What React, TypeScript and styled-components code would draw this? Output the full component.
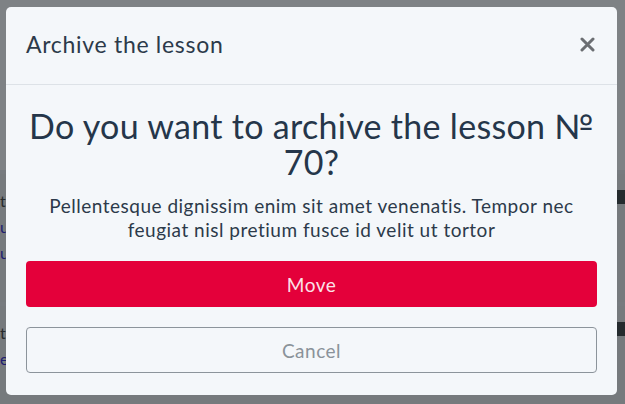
import React from "react"
import styled, { createGlobalStyle } from "styled-components"

const GlobalStyle = createGlobalStyle`
    html, body {
        margin: 0;
        padding: 0;
        width: 625px;
        height: 404px;
        overflow: hidden;
        background: #f4f6f8;
        font-family: Lato, "Open Sans", sans-serif;
    }
`

const Page = styled.div`
    position: relative;
    width: 625px;
    height: 404px;
    overflow: hidden;
`

const BackgroundList = styled.div`
    display: flex;
    flex-direction: column;
    padding-top: 170px;
`

const BackgroundRow = styled.div`
    display: flex;
    justify-content: space-between;
    height: 112px;
    padding: 16px 0 0 0;
    border-top: 4px solid #e4e7ea;
    background: #e2e4e6;
    font-size: 16px;
    line-height: 22px;
    color: #333;
`

const RowText = styled.div`
    display: flex;
    flex-direction: column;
    gap: 4px;
`

const BackgroundLink = styled.span`
    color: #2316c8;
`

const RowAction = styled.div`
    width: 60px;
    height: 14px;
    background: #303538;
`

const Overlay = styled.div`
    position: absolute;
    inset: 0;
    background: rgba(30, 34, 38, 0.55);
`

const Modal = styled.div`
    position: absolute;
    left: 6px;
    top: 7px;
    width: 611px;
    height: 388px;
    background: #f4f7fa;
    border-radius: 5px;
    display: flex;
    flex-direction: column;
    overflow: hidden;
`

const Header = styled.div`
    display: flex;
    align-items: center;
    justify-content: space-between;
    height: 74px;
    padding: 0 22px 3px 20px;
    border-bottom: 1px solid #dde2e7;
`

const Title = styled.h2`
    margin: 0;
    font-size: 23px;
    letter-spacing: 0.7px;
    font-weight: 400;
    color: #2c3a4a;
`

const CloseButton = styled.button`
    border: 0;
    background: none;
    padding: 0;
    display: flex;
    cursor: pointer;
`

const Body = styled.div`
    display: flex;
    flex-direction: column;
    padding: 23px 20px 0;
    text-align: center;
`

const Question = styled.h1`
    margin: 0 -4px;
    font-size: 34px;
    letter-spacing: 0.3px;
    line-height: 36px;
    font-weight: 400;
    color: #25364a;
`

const Text = styled.p`
    margin: 14px 20px 0;
    font-size: 19px;
    letter-spacing: 0.5px;
    line-height: 24px;
    color: #2c3a4a;
`

const Actions = styled.div`
    display: flex;
    flex-direction: column;
    gap: 20px;
    margin-top: 19px;
`

const Button = styled.button<{ $primary?: boolean }>`
    height: 46px;
    border-radius: 4px;
    font-family: inherit;
    font-size: 19px;
    letter-spacing: 0.5px;
    border: ${p => (p.$primary ? "none" : "1px solid #8c949b")};
    background: ${p => (p.$primary ? "#e4003a" : "transparent")};
    color: ${p => (p.$primary ? "#fbe2e8" : "#8a9299")};
`

const CloseIcon = () => (
    <svg width="15" height="15" viewBox="0 0 15 15">
        <path d="M2 2 L13 13 M13 2 L2 13" stroke="#6b6e72" strokeWidth="3" strokeLinecap="round" />
    </svg>
)

export default function App() {
    return (
        <Page>
            <GlobalStyle />
            <BackgroundList>
                <BackgroundRow>
                    <RowText>
                        <span>tr</span>
                        <BackgroundLink>u</BackgroundLink>
                        <BackgroundLink>u</BackgroundLink>
                    </RowText>
                    <RowAction />
                </BackgroundRow>
                <BackgroundRow>
                    <RowText>
                        <span>tr</span>
                        <BackgroundLink>ec</BackgroundLink>
                    </RowText>
                    <RowAction />
                </BackgroundRow>
            </BackgroundList>
            <Overlay />
            <Modal>
                <Header>
                    <Title>Archive the lesson</Title>
                    <CloseButton>
                        <CloseIcon />
                    </CloseButton>
                </Header>
                <Body>
                    <Question>Do you want to archive the lesson № 70?</Question>
                    <Text>
                        Pellentesque dignissim enim sit amet venenatis. Tempor nec feugiat nisl pretium
                        fusce id velit ut tortor
                    </Text>
                    <Actions>
                        <Button $primary>Move</Button>
                        <Button>Cancel</Button>
                    </Actions>
                </Body>
            </Modal>
        </Page>
    )
}
